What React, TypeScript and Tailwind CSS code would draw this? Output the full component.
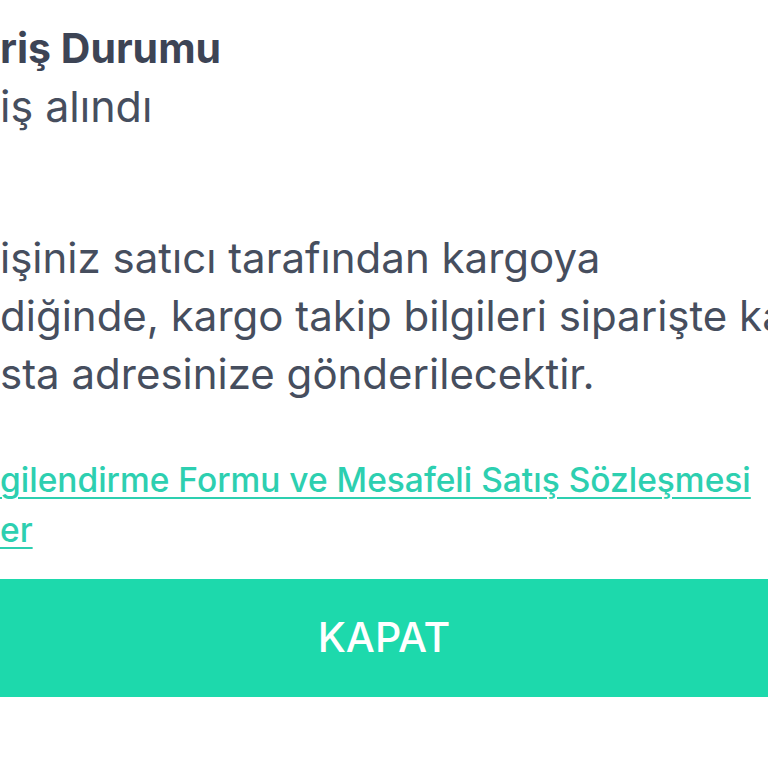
import React from 'react';

const bodyLines = [
  'işiniz satıcı tarafından kargoya',
  'diğinde, kargo takip bilgileri siparişte kayıtlı e-',
  'sta adresinize gönderilecektir.',
];

export default function App() {
  return (
    <div className="h-screen w-full overflow-hidden bg-white font-['Inter','Noto_Sans',sans-serif]">
      <div className="pt-[24px] whitespace-nowrap">
        <h1 className="text-[41px] font-bold leading-[48px] text-[#3d4455]">riş Durumu</h1>
        <p className="mt-[5px] text-[43px] leading-[58px] text-[#464e5e]">iş alındı</p>
      </div>

      <div className="mt-[94px] whitespace-nowrap text-[42px] leading-[58px] text-[#464e5e]">
        {bodyLines.map((line) => (
          <div key={line}>{line}</div>
        ))}
      </div>

      <div className="mt-[52px] whitespace-nowrap text-[33.5px] font-medium leading-[50px] text-[#2dcfb0]">
        <a href="#" className="underline decoration-2 underline-offset-[5px]">
          gilendirme Formu ve Mesafeli Satış Sözleşmesi
        </a>
        <br />
        <a href="#" className="underline decoration-2 underline-offset-[5px]">
          er
        </a>
      </div>

      <button className="mt-[24px] flex h-[118px] w-full items-center justify-center bg-[#1dd9ac] text-[41px] font-medium text-white">
        KAPAT
      </button>
    </div>
  );
}
